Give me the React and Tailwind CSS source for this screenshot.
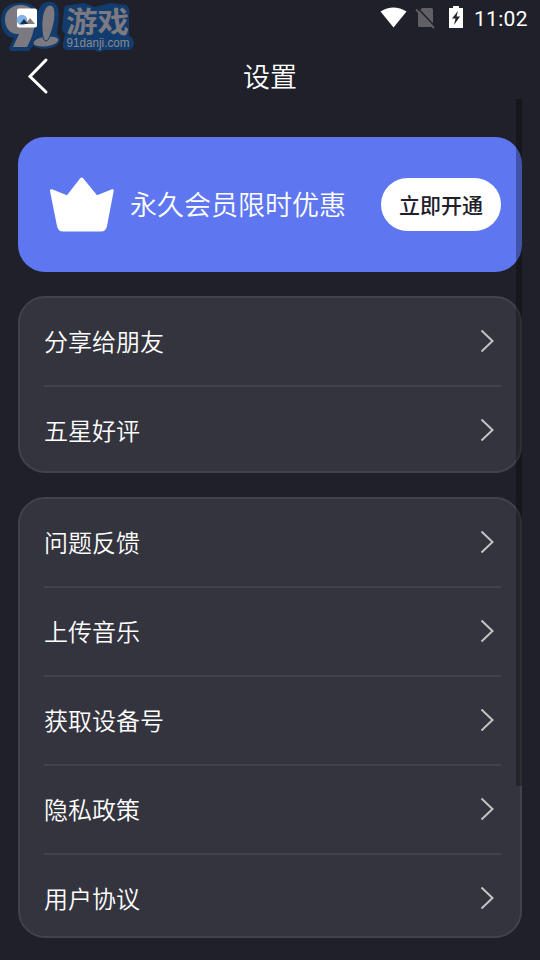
const shareItems = ['分享给朋友', '五星好评'];
const supportItems = ['问题反馈', '上传音乐', '获取设备号', '隐私政策', '用户协议'];

function Watermark() {
  return (
    <svg className="absolute left-0 top-0 overflow-visible" width="140" height="56" viewBox="0 0 140 56">
      <g fill="#123c6d">
        <path d="M1 22C0 8 10 2 22 3C32 3 36 8 38 12C40 4 45 1 52 2C60 4 60 14 57 34C62 38 61 44 54 47C46 50 38 49 33 46L29 51H11Q8 50 10 46L14 38C7 37 2 32 1 22Z" />
        <path d="M64 9Q64 5 70 5L84 3L95 7L110 3L126 5Q131 9 129 14L129 36Q134 38 134 43Q133 50 128 50L104 50Q99 54 95 50H67Q62 49 63 43L65 34L62 30Z" />
      </g>
      <g fill="#7c7a80">
        <path d="M5 21C4 11 12 5 21 5C32 5 38 14 35 24C33 34 31 40 27 47H13L19 34C11 35 6 29 5 21Z" />
        <ellipse cx="46" cy="41.500" rx="12.500" ry="4.800" transform="rotate(-8 46 41.500)" />
        <path d="M43.500 39C40 25 42 6 50 5C59 6 54 28 48.500 39Q46 43 43.500 39Z" stroke="#123c6d" strokeWidth="1" />
        <text x="66" y="32.500" fontSize="29" fontWeight="700" textLength="63" lengthAdjust="spacingAndGlyphs">游戏</text>
      </g>
      <text x="66.500" y="47" fill="#8a8a90" fontSize="12" textLength="63" lengthAdjust="spacingAndGlyphs" fontFamily="Liberation Sans, sans-serif">91danji.com</text>
      <rect x="17" y="8.500" width="20" height="19" rx="2" fill="#fff" />
      <circle cx="22" cy="20" r="5.300" fill="#83b1ec" />
      <path d="M20 24L24 19L27 22L30 18L35 24Z" fill="#827f80" />
      <path d="M20 24L24 19L28 24Z" fill="#18314f" />
    </svg>
  );
}

function StatusIcons() {
  return (
    <svg width="90" height="36" viewBox="378 0 90 36">
      <path d="M380.500 11.500Q393.500 3.500 406.500 11.500L393.500 27.500Z" fill="#fff" />
      <path d="M422 8H431.500Q433 8 433 9.500V27H419.500Q418 27 418 25.500V12Z" fill="#605f66" />
      <path d="M417.500 8L435.500 27" stroke="#20202a" strokeWidth="1.500" />
      <path d="M416 9.500L434 28" stroke="#605f66" strokeWidth="1.800" />
      <path d="M449 8H453V6H459V8H463V28H449Z" fill="#fff" />
      <path d="M458 11L452 18.500H455.500L454 25L460 16.500H456.500Z" fill="#20202a" />
    </svg>
  );
}

function MenuCard({ items, className }) {
  return (
    <section className={`overflow-hidden rounded-[27px] border-2 border-[#42424b] bg-[#34343e] pl-6 pr-[19px] ${className}`}>
      {items.map((item, i) => (
        <div
          key={item}
          className={`flex h-[89px] items-center justify-between border-b-2 pb-px pr-[6px] ${i === items.length - 1 ? 'border-transparent' : 'border-[#42424b]'}`}
        >
          <span className="-mt-px text-[24px] font-[350] leading-[36px]">{item}</span>
          <svg width="16" height="24" viewBox="0 0 16 24" fill="none" stroke="#c3c3c5" strokeWidth="2">
            <path d="M2.500 1.500L13.500 12L2.500 22.500" />
          </svg>
        </div>
      ))}
    </section>
  );
}

export default function App() {
  return (
    <div className="relative flex h-[960px] w-[540px] flex-col overflow-hidden bg-[#20202a] font-['Noto_Sans_CJK_SC',sans-serif] text-white">
      <div className="flex h-9 items-center justify-end pr-3">
        <StatusIcons />
        <span className="ml-[6px] w-[54px] whitespace-nowrap pt-[2px] font-[Roboto,sans-serif] text-[21px] font-[450] leading-6 tracking-[0.3px]">11:02</span>
      </div>
      <header className="grid h-[63px] grid-cols-[80px_1fr_80px] items-center pt-[17px]">
        <svg className="-mt-[1px] ml-[26px]" width="24" height="38" viewBox="0 0 24 38" fill="none" stroke="#fff" strokeWidth="3" strokeLinecap="round">
          <path d="M20 3L4 19.500L20 35" />
        </svg>
        <h1 className="text-center text-[27px] font-[350] leading-[40px]">设置</h1>
      </header>
      <main className="px-[18px] pt-[38px]">
        <section className="flex h-[135px] items-center rounded-[27px] bg-[#5e77f0] pl-8 pr-[21px]">
          <svg width="64" height="56" viewBox="0 0 64 56" fill="#fff">
            <path d="M30 1.500Q31.700 -.5 33.400 1.500L47 18.200L62 12.300Q64 12 63.700 14L57 49Q56 54.500 51 54.500H13Q8 54.500 7 49L0 14Q-.2 12 2 12.300L17 18.200Z" />
          </svg>
          <p className="-mt-[2px] ml-4 whitespace-nowrap text-[27px] font-[350] leading-[40px]">永久会员限时优惠</p>
          <button className="ml-auto h-[53px] w-[120px] rounded-full bg-white text-[21px] font-medium leading-[53px] text-[#20202a]">立即开通</button>
        </section>
        <MenuCard items={shareItems} className="mt-6 h-[177px]" />
        <MenuCard items={supportItems} className="mt-6 h-[441px]" />
      </main>
      <div className="absolute left-[516px] top-[99px] h-[687px] w-[6px] bg-black/30" />
      <Watermark />
    </div>
  );
}
